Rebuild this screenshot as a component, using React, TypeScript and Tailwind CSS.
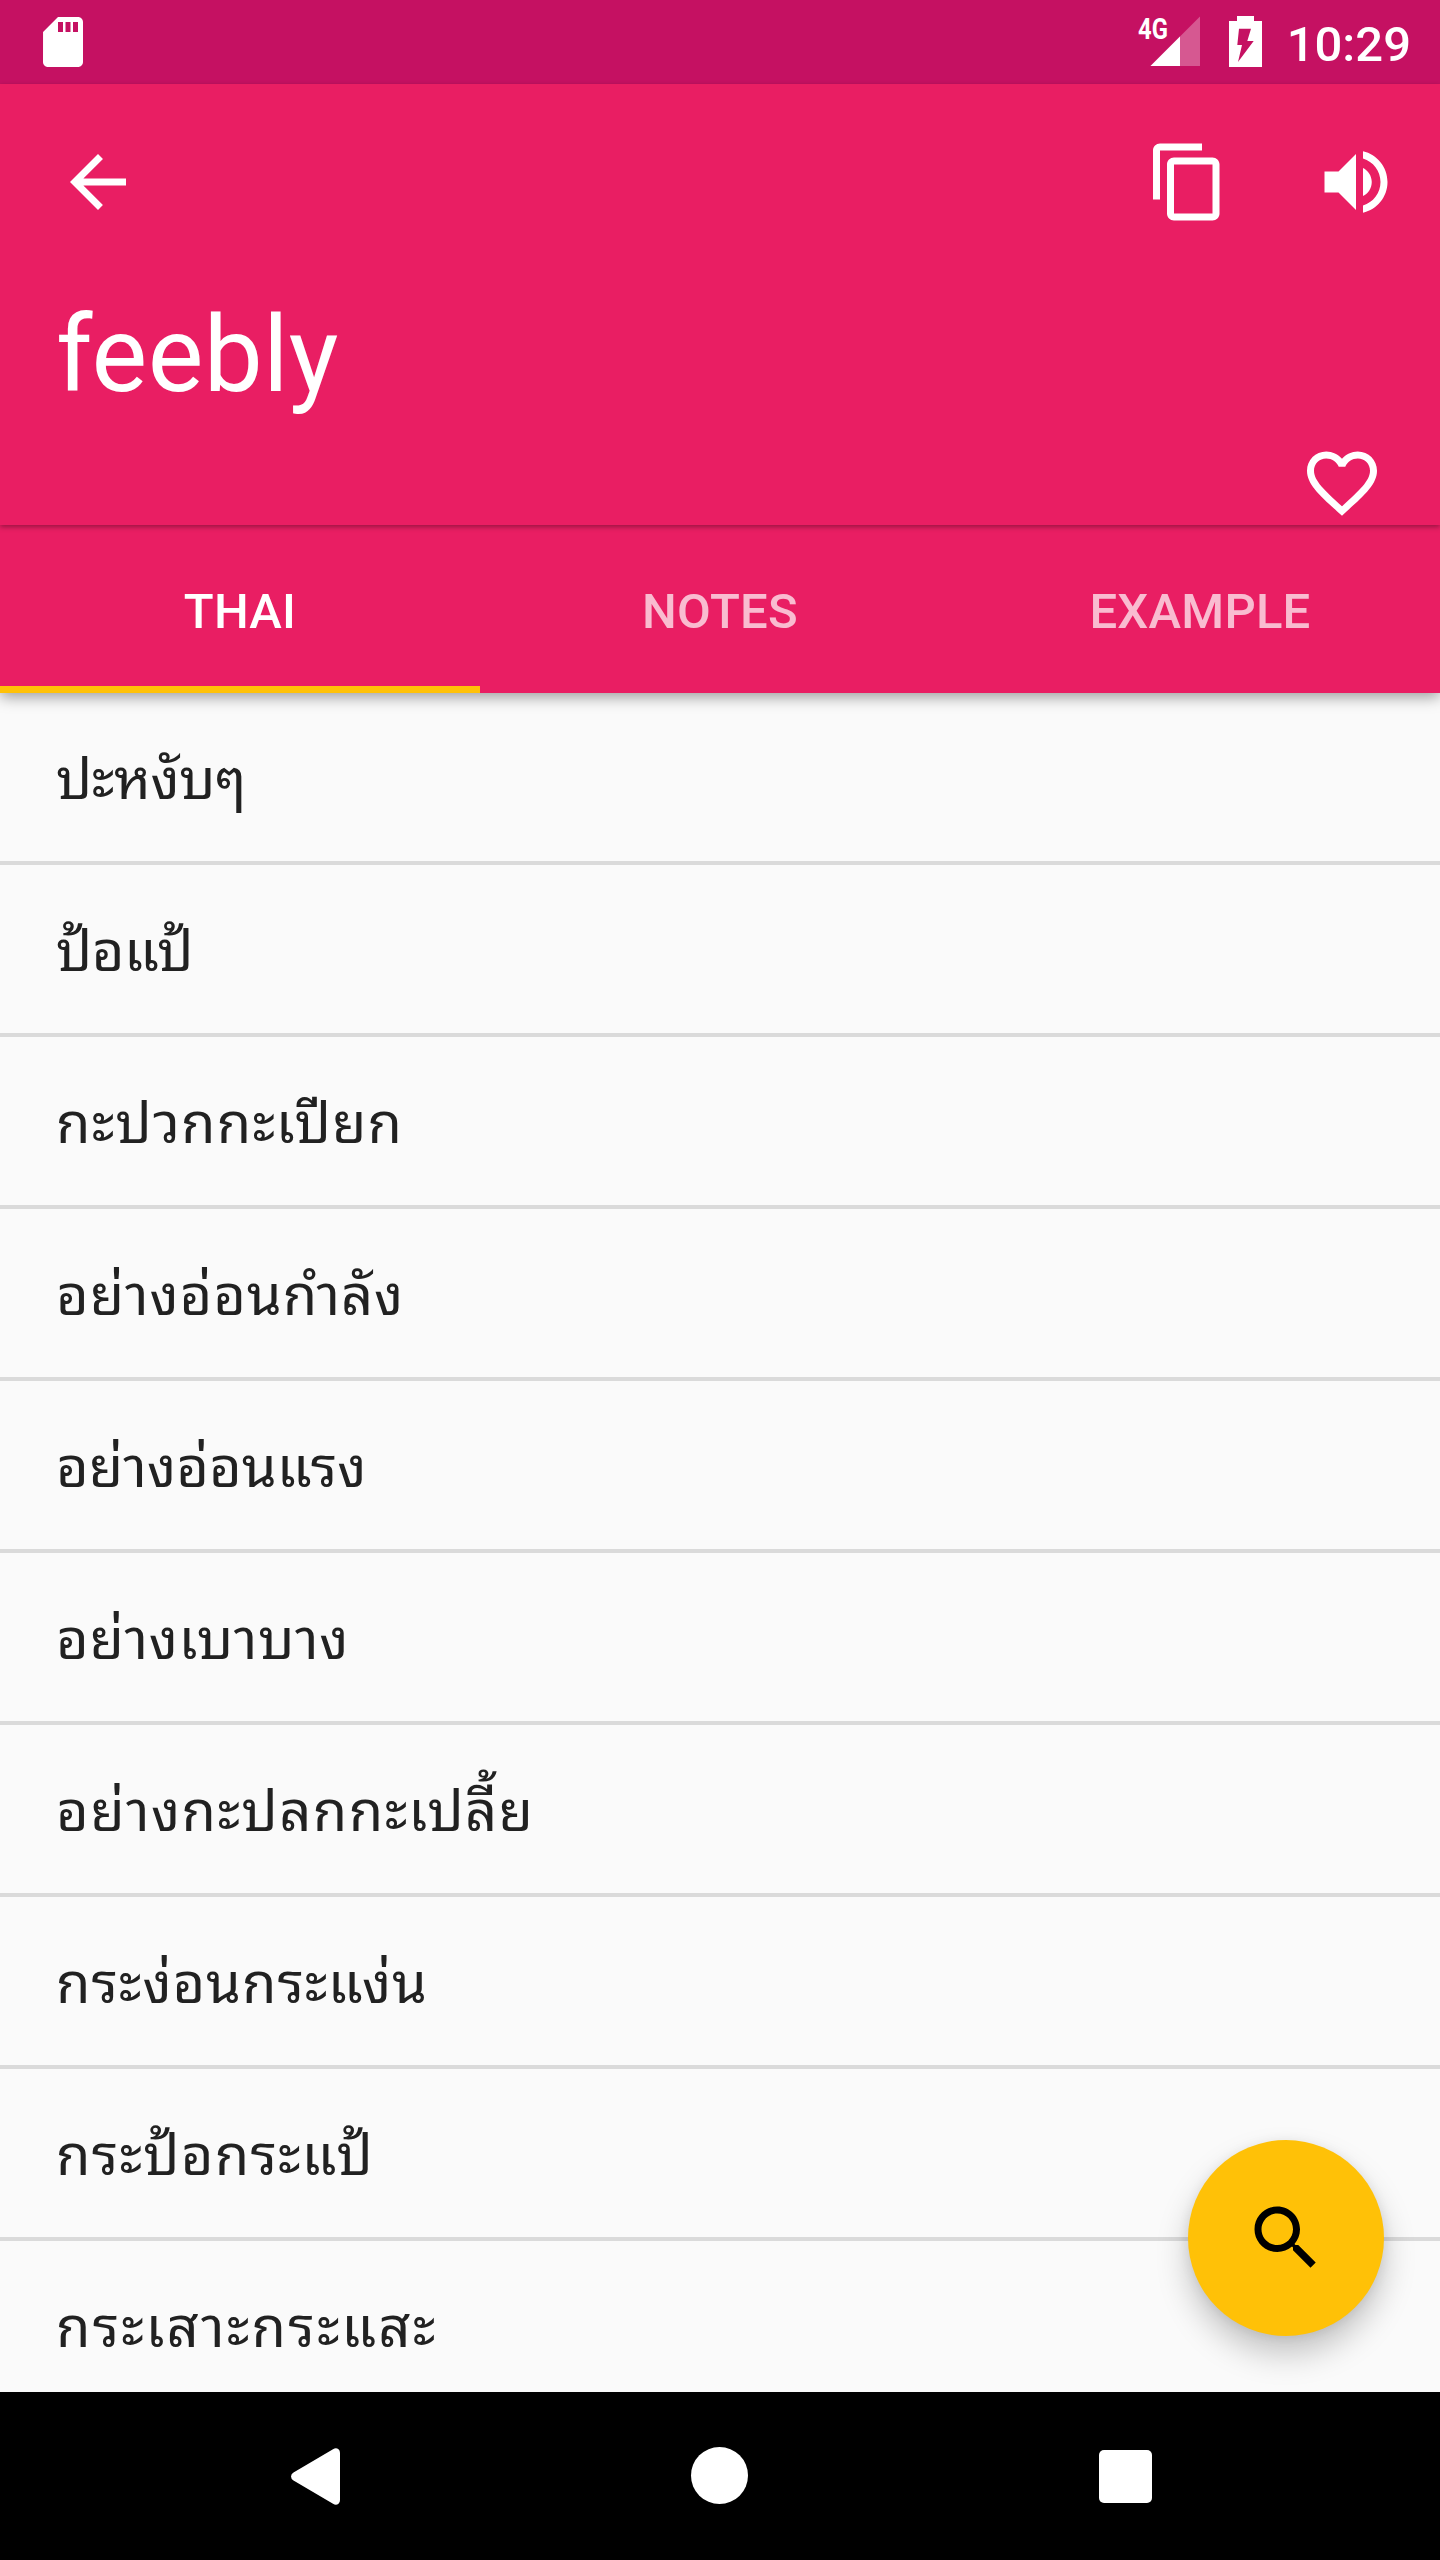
const words = [
  { text: 'ปะหงับๆ', tracking: 'tracking-[-0.4px]' },
  { text: 'ป้อแป้', tracking: 'tracking-[-0.5px]' },
  { text: 'กะปวกกะเปียก', tracking: 'tracking-[1.2px]' },
  { text: 'อย่างอ่อนกำลัง', tracking: 'tracking-[0.95px]' },
  { text: 'อย่างอ่อนแรง', tracking: 'tracking-[0.1px]' },
  { text: 'อย่างเบาบาง', tracking: 'tracking-[0.7px]' },
  { text: 'อย่างกะปลกกะเปลี้ย', tracking: 'tracking-[1.45px]' },
  { text: 'กระง่อนกระแง่น', tracking: 'tracking-[0.95px]' },
  { text: 'กระป้อกระแป้', tracking: 'tracking-[1.25px]' },
  { text: 'กระเสาะกระแสะ', tracking: 'tracking-[2.2px]' },
];

function Icon({ d, className }: { d: string; className?: string }) {
  return (
    <svg viewBox="0 0 24 24" fill="currentColor" className={`shrink-0 ${className ?? 'size-[84px]'}`}>
      <path d={d} />
    </svg>
  );
}

function StatusBar() {
  return (
    <div className="flex h-[84px] shrink-0 items-start bg-[#c51162] pl-[33px] pr-[29px]">
      <Icon
        className="mt-3 size-[60px]"
        d="M18 2h-8L4.02 8 4 20c0 1.1.9 2 2 2h12c1.1 0 2-.9 2-2V4c0-1.1-.9-2-2-2zm-6 6h-2V4h2v4zm3 0h-2V4h2v4zm3 0h-2V4h2v4z"
      />
      <div className="ml-auto flex items-start">
        <span className="mt-[12px] -mr-[18px] w-[30px] origin-left scale-x-[0.82] text-[29px] leading-[34px] font-bold">4G</span>
        <svg viewBox="0 0 50 50" className="mt-4 h-[50px] w-[50px]">
          <path d="M50 .5V50H.5z" fill="#fff" fillOpacity=".3" />
          <path d="M30 20.5V50H.5z" fill="#fff" />
        </svg>
        <svg viewBox="0 0 33 51" className="ml-[29px] mt-4 h-[51px] w-[33px]">
          <path
            fillRule="evenodd"
            fill="#fff"
            d="M8 0h17v5h8v46H0V5h8zM10 12.7 8.3 29h4.7L9 46 24.7 25h-6.4L22 12.7z"
          />
        </svg>
        <span className="ml-[25px] mt-[16px] text-[49px] leading-[57px] font-medium">10:29</span>
      </div>
    </div>
  );
}

function Header() {
  return (
    <header className="relative z-20 flex h-[441px] shrink-0 flex-col bg-[#e91e63] shadow-[0_2px_5px_rgba(0,0,0,0.35)]">
      <div className="flex h-[196px] items-center pl-14 pr-[42px]">
        <Icon d="M20 11H7.83l5.59-5.59L12 4l-8 8 8 8 1.41-1.41L7.83 13H20v-2z" />
        <div className="ml-auto flex gap-[84px]">
          <Icon d="M16 1H4c-1.1 0-2 .9-2 2v14h2V3h12V1zm3 4H8c-1.1 0-2 .9-2 2v14c0 1.1.9 2 2 2h11c1.1 0 2-.9 2-2V7c0-1.1-.9-2-2-2zm0 16H8V7h11v14z" />
          <Icon d="M3 9v6h4l5 5V4L7 9H3zm13.5 3c0-1.77-1.02-3.29-2.5-4.03v8.05c1.48-.73 2.5-2.25 2.5-4.02zM14 3.23v2.06c2.89.86 5 3.54 5 6.71s-2.11 5.85-5 6.71v2.06c4.01-.91 7-4.49 7-8.77s-2.99-7.86-7-8.77z" />
        </div>
      </div>
      <h1 className="mt-[14px] px-14 text-[105px] leading-[123px] tracking-[0.35px]">feebly</h1>
      <Icon
        className="mt-auto mr-14 size-[84px] self-end"
        d="M16.5 3c-1.74 0-3.41.81-4.5 2.09C10.91 3.81 9.24 3 7.5 3 4.42 3 2 5.42 2 8.5c0 3.78 3.4 6.86 8.55 11.54L12 21.35l1.45-1.32C18.6 15.36 22 12.28 22 8.5 22 5.42 19.58 3 16.5 3zm-4.4 15.55l-.1.1-.1-.1C7.14 14.24 4 11.39 4 8.5 4 6.5 5.5 5 7.5 5c1.54 0 3.04.99 3.57 2.36h1.87C13.46 5.99 14.96 5 16.5 5c2 0 3.5 1.5 3.5 3.5 0 2.89-3.14 5.74-7.9 10.05z"
      />
    </header>
  );
}

function Tabs() {
  return (
    <nav className="relative z-10 grid h-[168px] shrink-0 grid-cols-3 bg-[#e91e63] text-[49px] font-medium tracking-[0.25px] shadow-[0_4px_14px_rgba(0,0,0,0.38)]">
      <div className="flex items-center justify-center border-b-[7px] border-[#ffc107] pt-[12px]">THAI</div>
      <div className="flex items-center justify-center pt-[5px] text-white/70">NOTES</div>
      <div className="flex items-center justify-center pt-[5px] text-white/70">EXAMPLE</div>
    </nav>
  );
}

export default function App() {
  return (
    <div className="relative flex h-[2560px] w-[1440px] flex-col overflow-hidden bg-[#fafafa] font-[Roboto,sans-serif] text-white">
      <StatusBar />
      <Header />
      <Tabs />
      <ul className="min-h-0 flex-1 overflow-hidden text-[#212121]">
        {words.map(({ text, tracking }) => (
          <li
            key={text}
            className={`flex h-[172px] items-center border-b-4 border-[#dadada] px-14 pb-[6px] font-['Noto_Sans_Thai_Looped','Noto_Sans',sans-serif] text-[56px] leading-[84px] ${tracking}`}
          >
            {text}
          </li>
        ))}
      </ul>
      <button className="absolute right-14 bottom-56 z-10 flex size-[196px] items-center justify-center rounded-full bg-[#ffc107] text-black shadow-[0_18px_32px_rgba(0,0,0,0.22),0_2px_12px_rgba(0,0,0,0.08)]">
        <Icon d="M15.5 14h-.79l-.28-.27C15.41 12.59 16 11.11 16 9.5 16 5.91 13.09 3 9.5 3S3 5.91 3 9.5 5.91 16 9.5 16c1.61 0 3.09-.59 4.23-1.57l.27.28v.79l5 4.99L20.49 19l-4.99-5zm-6 0C7.01 14 5 11.99 5 9.5S7.01 5 9.5 5 14 7.01 14 9.5 11.99 14 9.5 14z" />
      </button>
      <div className="z-20 flex h-[168px] shrink-0 items-center bg-black pl-[291px]">
        <svg viewBox="0 0 49 57" className="h-[57px] w-[49px]" fill="#fff">
          <path d="M2.5 24.5 42 1.2Q45-.6 47.5 1.2 49 2.3 49 5v47q0 2.7-1.5 3.8-2.5 1.8-5.5 0L2.5 32.500Q0 31 0 28.500T2.500 24.500z" />
        </svg>
        <div className="ml-[351px] mb-px size-[57px] rounded-full bg-white" />
        <div className="ml-[351px] mt-px h-[53px] w-[53px] rounded-[5px] bg-white" />
      </div>
    </div>
  );
}
